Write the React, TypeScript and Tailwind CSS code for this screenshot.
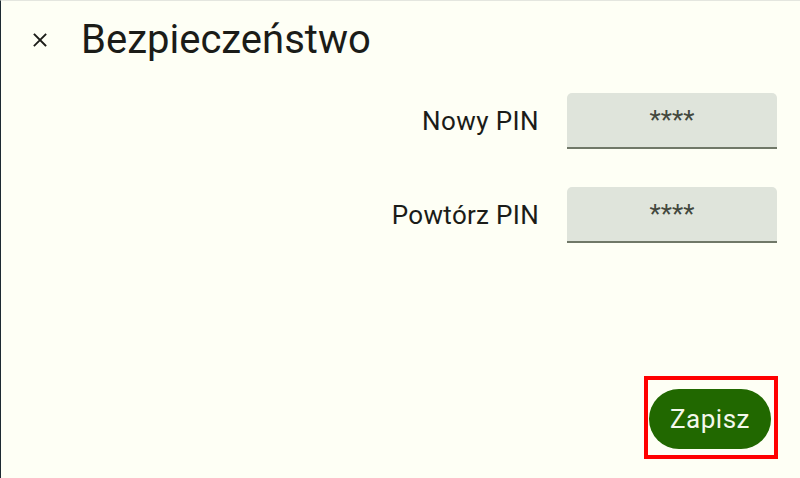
export default function App() {
  return (
    <div className="w-[800px] h-[478px] bg-[#fefff5] border-l border-l-[#1d2a32] border-t border-t-[#e4e6df] flex flex-col font-['Roboto',sans-serif] text-[#1b1c18] overflow-hidden">
      <div className="flex items-center h-[48px] mt-[15px]">
        <svg className="ml-[32px]" width="14" height="14" viewBox="0 0 14 14" fill="none">
          <path d="M1.5 1.5 L12.5 12.5 M12.5 1.5 L1.5 12.5" stroke="#1b1c18" strokeWidth="1.8" strokeLinecap="square" />
        </svg>
        <h1 className="ml-[34px] text-[40px] leading-[48px] font-normal">Bezpieczeństwo</h1>
      </div>

      <div className="flex flex-col mt-[29px] pr-[23px]">
        <div className="flex justify-end items-center gap-[28px]">
          <span className="text-[26px] tracking-[0.4px]">Nowy PIN</span>
          <div className="w-[210px] h-[56px] rounded-t-[5px] bg-[#dfe4db] border-b-2 border-b-[#707868] flex items-center justify-center text-[26px] text-[#43483e]">
            ****
          </div>
        </div>
        <div className="flex justify-end items-center gap-[28px] mt-[38px]">
          <span className="text-[26px] tracking-[0.3px]">Powtórz PIN</span>
          <div className="w-[210px] h-[56px] rounded-t-[5px] bg-[#dfe4db] border-b-2 border-b-[#707868] flex items-center justify-center text-[26px] text-[#43483e]">
            ****
          </div>
        </div>
      </div>

      <div className="mt-auto self-end mr-[22px] mb-[19px] border-4 border-[#ff0000] pt-[9px] pl-[1px] pr-[3px] pb-[6px]">
        <button className="w-[122px] h-[60px] rounded-full bg-[#216800] text-[#f4f8ec] text-[26px] tracking-[0.5px] flex items-center justify-center">
          Zapisz
        </button>
      </div>
    </div>
  );
}
